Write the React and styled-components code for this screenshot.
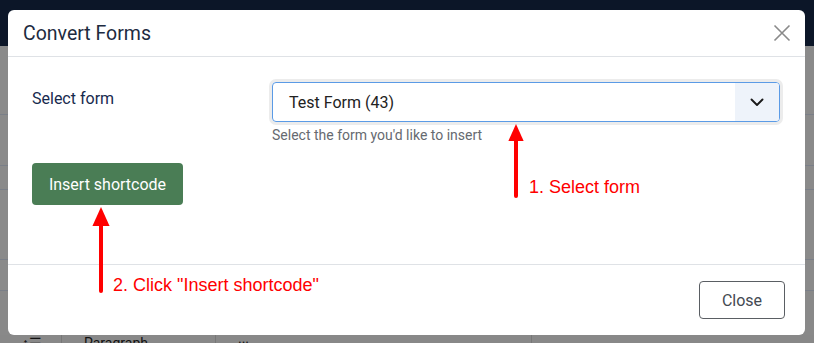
import styled, { createGlobalStyle } from 'styled-components';

const Global = createGlobalStyle`
  html, body { margin: 0; padding: 0; }
  body { font-family: Roboto, "Liberation Sans", sans-serif; overflow: hidden; }
`;

function ChevronDown() {
  return (
    <svg width="16" height="16" viewBox="0 0 16 16" fill="none">
      <path d="M2.5 5.5 L8 11 L13.5 5.5" stroke="#1a1a1a" strokeWidth="1.9" strokeLinecap="round" strokeLinejoin="round" />
    </svg>
  );
}

function CloseIcon() {
  return (
    <svg width="18" height="18" viewBox="0 0 18 18">
      <path d="M1.5 1.5 L16.5 16.5 M16.5 1.5 L1.5 16.5" stroke="#8a8a8a" strokeWidth="1.6" />
    </svg>
  );
}

function Arrow({ x, top, bottom, head }) {
  const w = head * 0.9;
  return (
    <S.ArrowSvg style={{ left: x - 10, top }} width="20" height={bottom - top}>
      <polygon points={`10,0 ${10 - w / 2},${head} ${10 + w / 2},${head}`} fill="#ff0000" />
      <line x1="10" y1={head - 1} x2="10" y2={bottom - top - 2} stroke="#ff0000" strokeWidth="4" strokeLinecap="round" />
    </S.ArrowSvg>
  );
}

export default function App() {
  return (
    <S.Page>
      <Global />
      <S.TopBar />
      <S.BgRows>
        <S.BgRow $h={68} />
        <S.BgRow $h={50} />
        <S.BgRow $h={23} />
        <S.BgRow $h={69} />
        <S.BgRow $h={30} />
      </S.BgRows>
      <S.BgToolbar>
        <S.BgTool $w={62}>↑☰</S.BgTool>
        <S.BgTool $w={154}>Paragraph</S.BgTool>
        <S.BgTool $w={316}>···</S.BgTool>
      </S.BgToolbar>

      <S.Modal>
        <S.Header>
          <S.Title>Convert Forms</S.Title>
          <S.CloseX><CloseIcon /></S.CloseX>
        </S.Header>
        <S.Body>
          <S.FieldRow>
            <S.Label>Select form</S.Label>
            <S.Control>
              <S.Select>
                <S.SelectValue>Test Form (43)</S.SelectValue>
                <S.SelectToggle><ChevronDown /></S.SelectToggle>
              </S.Select>
              <S.Help>Select the form you'd like to insert</S.Help>
            </S.Control>
          </S.FieldRow>
          <S.PrimaryButton>Insert shortcode</S.PrimaryButton>
        </S.Body>
        <S.Footer>
          <S.SecondaryButton>Close</S.SecondaryButton>
        </S.Footer>
      </S.Modal>

      <Arrow x={516} top={124} bottom={198} head={17} />
      <S.Note style={{ left: 529, top: 176 }}>1. Select form</S.Note>
      <Arrow x={101} top={207} bottom={293} head={19} />
      <S.Note style={{ left: 113, top: 274 }}>2. Click "Insert shortcode"</S.Note>
    </S.Page>
  );
}

const S = {
  Page: styled.div`
    position: relative;
    width: 814px;
    height: 343px;
    background: #898989;
    overflow: hidden;
  `,
  TopBar: styled.div`
    height: 46px;
    background: #0c1628;
  `,
  BgRows: styled.div`
    display: flex;
    flex-direction: column;
  `,
  BgRow: styled.div`
    height: ${p => p.$h}px;
    border-bottom: 1px solid #7a7f88;
    background: #8a8a8a;
  `,
  BgToolbar: styled.div`
    position: absolute;
    left: 0;
    right: 0;
    bottom: 0;
    height: 8px;
    display: flex;
    background: #888;
  `,
  BgTool: styled.div`
    width: ${p => p.$w}px;
    box-sizing: border-box;
    border-right: 1px solid #777;
    padding: 1px 0 0 22px;
    font-size: 14px;
    color: #111;
    line-height: 14px;
    overflow: hidden;
  `,
  Modal: styled.div`
    position: absolute;
    left: 8px;
    top: 10px;
    width: 797px;
    height: 325px;
    background: #fff;
    border-radius: 6px;
    display: flex;
    flex-direction: column;
    overflow: hidden;
  `,
  Header: styled.div`
    height: 46px;
    flex: none;
    display: flex;
    align-items: center;
    justify-content: space-between;
    padding: 0 13px 0 15px;
    border-bottom: 1px solid #dfe2e6;
  `,
  Title: styled.div`
    font-size: 19.5px;
    color: #1d2b40;
  `,
  CloseX: styled.div`
    display: flex;
    width: 20px;
    height: 20px;
    align-items: center;
    justify-content: center;
  `,
  Body: styled.div`
    flex: 1;
    padding: 25px 24px 0 24px;
    display: flex;
    flex-direction: column;
    align-items: flex-start;
  `,
  FieldRow: styled.div`
    display: flex;
    align-self: stretch;
    align-items: flex-start;
  `,
  Label: styled.div`
    width: 240px;
    flex: none;
    padding-top: 7px;
    font-size: 16px;
    color: #172a4e;
  `,
  Control: styled.div`
    flex: 1;
    margin-right: 1px;
  `,
  Select: styled.div`
    height: 40px;
    box-sizing: border-box;
    display: flex;
    border: 1px solid #5b9be6;
    border-radius: 4px;
    box-shadow: 0 0 0 3px #ececec;
    overflow: hidden;
  `,
  SelectValue: styled.div`
    flex: 1;
    display: flex;
    align-items: center;
    padding-left: 16px;
    font-size: 16px;
    color: #222;
  `,
  SelectToggle: styled.div`
    width: 44px;
    display: flex;
    align-items: center;
    justify-content: center;
    background: #eef3fa;
  `,
  Help: styled.div`
    margin-top: 5px;
    font-size: 14px;
    color: #666a70;
  `,
  PrimaryButton: styled.button`
    margin-top: 20px;
    width: 151px;
    height: 42px;
    border: none;
    border-radius: 4px;
    background: #4a7d55;
    color: #fff;
    font-family: Roboto, sans-serif;
    font-size: 16px;
    font-weight: 400;
  `,
  Footer: styled.div`
    height: 71px;
    flex: none;
    border-top: 1px solid #dfe2e6;
    display: flex;
    justify-content: flex-end;
    align-items: flex-start;
    padding: 16px 20px 0 0;
    box-sizing: border-box;
  `,
  SecondaryButton: styled.button`
    width: 86px;
    height: 38px;
    border: 1px solid #5a5e63;
    border-radius: 4px;
    background: #fff;
    color: #444a52;
    font-family: Roboto, sans-serif;
    font-size: 16px;
  `,
  ArrowSvg: styled.svg`
    position: absolute;
  `,
  Note: styled.div`
    position: absolute;
    font-family: "Liberation Sans", Arial, sans-serif;
    font-size: 18px;
    line-height: 22px;
    color: #ff0000;
    white-space: nowrap;
  `,
};
